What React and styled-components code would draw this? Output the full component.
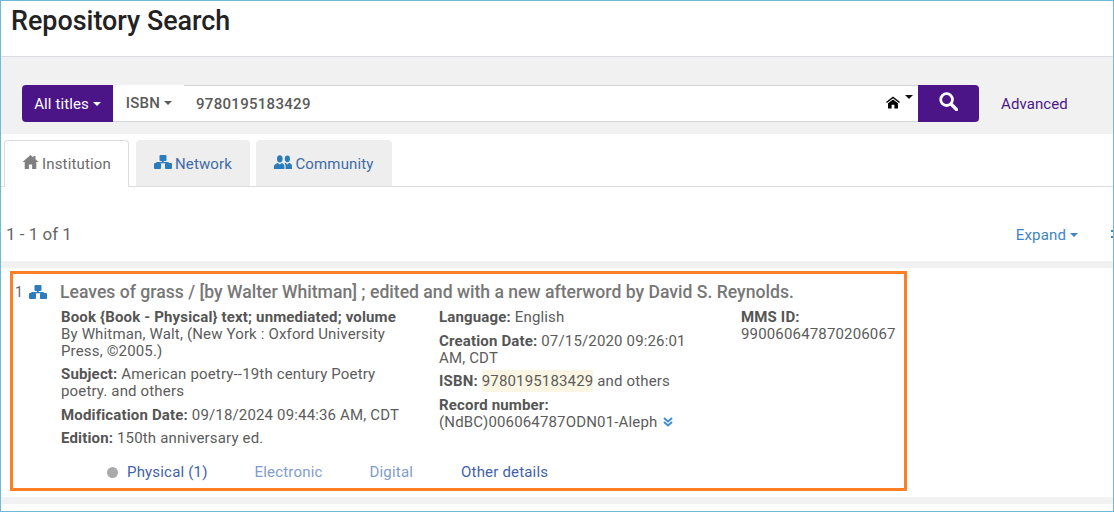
import styled, { createGlobalStyle } from "styled-components";

const GlobalStyle = createGlobalStyle`
  html, body {
    margin: 0;
    padding: 0;
    background: #fff;
  }
  body {
    font-family: Roboto, "Liberation Sans", sans-serif;
    color: #5a5a5a;
  }
  * {
    box-sizing: border-box;
  }
`;

/* PAGE FRAME */
const Frame = styled.div`
  width: 1114px;
  height: 512px;
  overflow: hidden;
  border: 1px solid #6cbcd8;
  background: #fff;
`;

/* HEADER */
const Header = styled.header`
  height: 56px;
  padding: 4px 0 0 10px;
  border-bottom: 1px solid #dcdde3;
`;

const PageTitle = styled.h1`
  margin: 0;
  font-size: 26.9px;
  line-height: 32px;
  font-weight: 500;
  color: #222;
`;

/* SEARCH BAND */
const SearchBand = styled.div`
  height: 77px;
  padding: 28px 0 0 21px;
  background: #f1f1f1;
  display: flex;
  align-items: flex-start;
`;

const ScopeButton = styled.button`
  width: 91px;
  height: 37px;
  padding: 0;
  border: 0;
  border-radius: 4px 0 0 4px;
  background: #4b1587;
  color: #fff;
  font: 400 15px Roboto, sans-serif;
  letter-spacing: 0.1px;
  display: flex;
  align-items: center;
  justify-content: center;
  gap: 4px;
`;

const FieldSelect = styled.div`
  width: 71px;
  height: 37px;
  padding-left: 1px;
  background: #fff;
  border-bottom: 1px solid #d4d4d8;
  color: #5a5a5a;
  font-size: 15px;
  font-weight: 500;
  letter-spacing: 0.3px;
  display: flex;
  align-items: center;
  justify-content: center;
  gap: 4px;
`;

const QueryBox = styled.div`
  width: 734px;
  height: 37px;
  padding: 0 5px 0 12px;
  background: #fff;
  border-top: 1px solid #d4d4d8;
  border-bottom: 1px solid #d4d4d8;
  display: flex;
  align-items: center;
  justify-content: space-between;
`;

const QueryText = styled.span`
  font-size: 15px;
  font-weight: 500;
  letter-spacing: 0.3px;
  color: #5a5a5a;
`;

const HomeScope = styled.span`
  align-self: stretch;
  padding-top: 9px;
  display: flex;
  align-items: flex-start;
  gap: 5px;
  color: #111;
`;

const SearchButton = styled.button`
  width: 61px;
  height: 37px;
  padding: 0 0 4px;
  border: 0;
  border-radius: 0 4px 4px 0;
  background: #4b1587;
  display: flex;
  align-items: center;
  justify-content: center;
`;

const AdvancedLink = styled.a`
  margin-left: 22px;
  line-height: 38px;
  font-size: 15px;
  letter-spacing: 0.1px;
  color: #4b1587;
`;

const Caret = styled.span`
  display: inline-block;
  width: 0;
  height: 0;
  border-left: 4px solid transparent;
  border-right: 4px solid transparent;
  border-top: 4px solid ${(p) => p.$color || "currentColor"};
`;

/* TABS */
const TabBar = styled.nav`
  height: 53px;
  padding: 6px 0 0 3px;
  border-bottom: 1px solid #dcdde3;
  display: flex;
  gap: 6px;
`;

const Tab = styled.div`
  width: ${(p) => p.$width}px;
  height: ${(p) => (p.$active ? "47px" : "46px")};
  margin-right: ${(p) => p.$gap || 0}px;
  padding-top: ${(p) => (p.$active ? "0" : "2px")};
  border: ${(p) => (p.$active ? "1px solid #dcdde3" : "0")};
  border-bottom: 0;
  border-radius: 4px 4px 0 0;
  background: ${(p) => (p.$active ? "#fff" : "#eeeeee")};
  color: ${(p) => (p.$active ? "#6b6b6b" : "#3f6aa6")};
  font-size: 15px;
  letter-spacing: 0.15px;
  display: flex;
  align-items: center;
  justify-content: center;
  gap: 3px;

  svg {
    margin-bottom: 4px;
  }
`;

/* RESULT TOOLBAR */
const ResultBar = styled.div`
  height: 74px;
  padding: 20px 0 0 5px;
  display: flex;
  align-items: center;
  justify-content: space-between;
`;

const ResultCount = styled.span`
  font-size: 17px;
  color: #666;
`;

const ResultActions = styled.div`
  display: flex;
  align-items: center;
`;

const ExpandLink = styled.a`
  padding-top: 1px;
  font-size: 15px;
  letter-spacing: 0.15px;
  color: #3d85c0;
  display: flex;
  align-items: center;
  gap: 4px;
`;

/* menu button, mostly cut off by the window edge */
const MenuDots = styled.span`
  width: 2px;
  height: 8px;
  margin-left: 33px;
  border-top: 2px solid #3d85c0;
  border-bottom: 2px solid #3d85c0;
`;

const Divider = styled.div`
  height: 7px;
  background: #f1f1f1;
`;

/* RESULT CARD */
const Card = styled.article`
  width: 897px;
  height: 220px;
  margin: 3px 0 6px 9px;
  border: 3px solid #ff7f27;
  padding: 7px 0 0 2px;
`;

const TitleRow = styled.div`
  display: flex;
  align-items: center;
  height: 22px;
`;

const RowNumber = styled.span`
  width: 14px;
  font-size: 14px;
  color: #666;
`;

const RecordTitle = styled.h2`
  margin: 0 0 0 13px;
  font-size: 17.6px;
  line-height: 22px;
  font-weight: 500;
  color: #777;
`;

const Columns = styled.div`
  margin: 6px 0 0 46px;
  display: grid;
  grid-template-columns: 378px 302px 170px;
  height: 154px;
`;

const Column = styled.div`
  display: flex;
  flex-direction: column;
  gap: ${(p) => p.$gap || 6}px;
  font-size: 15px;
  letter-spacing: 0.16px;
  line-height: 17px;
  color: #5c5c5c;
`;

const Field = styled.div``;

const Label = styled.b`
  font-weight: 700;
  color: #555;
`;

const Highlight = styled.mark`
  background: #fbf6e3;
  color: inherit;
  padding: 2px 0;
`;

const BottomTabs = styled.div`
  margin-left: 92px;
  display: flex;
  align-items: center;
  font-size: 15px;
  letter-spacing: 0.18px;
  line-height: 18px;
`;

const Dot = styled.span`
  width: 11px;
  height: 11px;
  border-radius: 50%;
  background: #aaa;
  margin-right: 9px;
`;

const BottomLink = styled.a`
  margin-right: ${(p) => p.$gap}px;
  color: ${(p) => (p.$muted ? "#819ccb" : "#3f62a8")};
`;

function HomeIcon() {
  return (
    <svg width="17" height="14" viewBox="0 0 16 14">
      <path d="M8 0 L10.8 2.4 V1 H13 V4.3 L16 7 H13.8 V14 H9.6 V9.5 H6.4 V14 H2.2 V7 H0 Z" fill="#808080" />
    </svg>
  );
}

function NetworkIcon({ size = 18 }) {
  return (
    <svg width={size} height={(size * 14) / 18} viewBox="0 0 18 14" fill="#2b7cbd">
      <rect x="5.5" y="0" width="7" height="6" rx="1" />
      <rect x="0" y="8" width="7" height="6" rx="1" />
      <rect x="11" y="8" width="7" height="6" rx="1" />
      <path d="M8.3 5 h1.4 v2 h5 v2 h-1.4 v-.8 h-9.6 v.8 h-1.4 v-2 h5.4 Z" />
    </svg>
  );
}

function UsersIcon() {
  return (
    <svg width="18" height="14" viewBox="0 0 18 14" fill="#2b7cbd">
      <ellipse cx="5.8" cy="3.8" rx="2.8" ry="3.6" />
      <path d="M0 14 V11.2 C0 9.6 2.4 8.6 3.8 8 L5.8 9.6 L7.8 8 C9.2 8.6 10.4 9.6 10.4 11.2 V14 Z" />
      <ellipse cx="13.4" cy="3.8" rx="2.6" ry="3.4" />
      <path d="M11.6 14 V11 C11.6 9.8 11 8.8 10.4 8.2 L11.6 7.8 L13.4 9.4 L15.2 7.8 C16.4 8.4 18 9.4 18 11 V14 Z" />
    </svg>
  );
}

function BlackHomeIcon() {
  return (
    <svg width="14" height="13" viewBox="0 0 15 13" style={{ marginTop: 1 }}>
      <path d="M7.5 0 L15 6 L14 7 L7.5 2 L1 7 L0 6 Z" fill="#000" />
      <path d="M7.5 3.2 L12.8 7.3 V13 H9 V9 H6 V13 H2.2 V7.3 Z" fill="#000" />
    </svg>
  );
}

function SearchIcon() {
  return (
    <svg width="19" height="19" viewBox="0 0 19 19" fill="none" stroke="#fff">
      <circle cx="7.6" cy="7.6" r="5.9" strokeWidth="2.8" />
      <path d="M12 12 L17.5 17.5" strokeWidth="3.2" strokeLinecap="round" />
    </svg>
  );
}

function DoubleChevron() {
  return (
    <svg width="10" height="10" viewBox="0 0 10 10" fill="none" stroke="#3f8fd0" strokeWidth="2" style={{ marginLeft: 6 }}>
      <path d="M1 1 L5 4.5 L9 1" />
      <path d="M1 5 L5 8.5 L9 5" />
    </svg>
  );
}

export default function App() {
  return (
    <>
      <GlobalStyle />
      <Frame>
        <Header>
          <PageTitle>Repository Search</PageTitle>
        </Header>

        <SearchBand>
          <ScopeButton>
            All titles <Caret />
          </ScopeButton>
          <FieldSelect>
            ISBN <Caret />
          </FieldSelect>
          <QueryBox>
            <QueryText>9780195183429</QueryText>
            <HomeScope>
              <BlackHomeIcon />
              <Caret />
            </HomeScope>
          </QueryBox>
          <SearchButton aria-label="Search">
            <SearchIcon />
          </SearchButton>
          <AdvancedLink>Advanced</AdvancedLink>
        </SearchBand>

        <TabBar>
          <Tab $active $width={125} $gap={1}>
            <HomeIcon /> Institution
          </Tab>
          <Tab $width={114}>
            <NetworkIcon /> Network
          </Tab>
          <Tab $width={136}>
            <UsersIcon /> Community
          </Tab>
        </TabBar>

        <ResultBar>
          <ResultCount>1 - 1 of 1</ResultCount>
          <ResultActions>
            <ExpandLink>
              Expand <Caret />
            </ExpandLink>
            <MenuDots />
          </ResultActions>
        </ResultBar>
        <Divider />

        <Card>
          <TitleRow>
            <RowNumber>1</RowNumber>
            <NetworkIcon />
            <RecordTitle>
              Leaves of grass / [by Walter Whitman] ; edited and with a new afterword by David S. Reynolds.
            </RecordTitle>
          </TitleRow>

          <Columns>
            <Column $gap={6.3}>
              <Field>
                <Label>Book {"{Book - Physical}"} text; unmediated; volume</Label>
                <br />
                By Whitman, Walt, (New York : Oxford University
                <br />
                Press, ©2005.)
              </Field>
              <Field>
                <Label>Subject:</Label> American poetry--19th century Poetry
                <br />
                poetry. and others
              </Field>
              <Field>
                <Label>Modification Date:</Label> 09/18/2024 09:44:36 AM, CDT
              </Field>
              <Field>
                <Label>Edition:</Label> 150th anniversary ed.
              </Field>
            </Column>
            <Column $gap={6.6}>
              <Field>
                <Label>Language:</Label> English
              </Field>
              <Field>
                <Label>Creation Date:</Label> 07/15/2020 09:26:01
                <br />
                AM, CDT
              </Field>
              <Field>
                <Label>ISBN:</Label> <Highlight>9780195183429</Highlight> and others
              </Field>
              <Field>
                <Label>Record number:</Label>
                <br />
                (NdBC)006064787ODN01-Aleph
                <DoubleChevron />
              </Field>
            </Column>
            <Column>
              <Field>
                <Label>MMS ID:</Label>
                <br />
                990060647870206067
              </Field>
            </Column>
          </Columns>

          <BottomTabs>
            <Dot />
            <BottomLink $gap={47}>Physical (1)</BottomLink>
            <BottomLink $muted $gap={47}>Electronic</BottomLink>
            <BottomLink $muted $gap={48}>Digital</BottomLink>
            <BottomLink $gap={0}>Other details</BottomLink>
          </BottomTabs>
        </Card>
        <Divider />
      </Frame>
    </>
  );
}
